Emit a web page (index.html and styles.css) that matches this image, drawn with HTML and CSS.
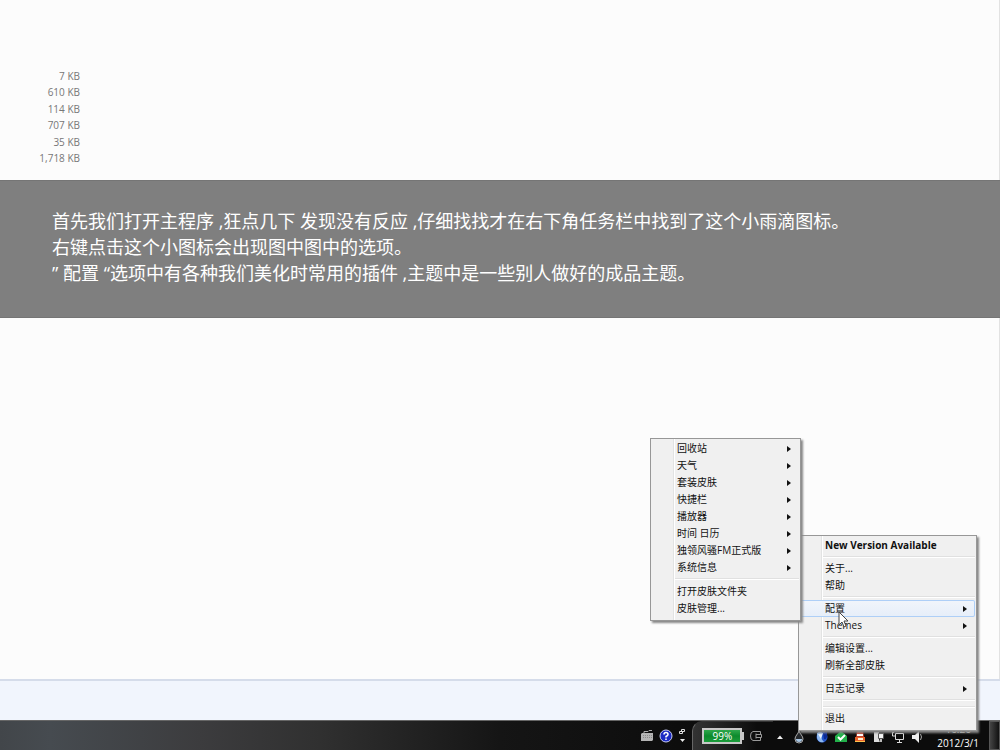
FILE: index.html
```html
<!DOCTYPE html>
<html lang="zh-CN">
  <head>
    <meta charset="utf-8">
    <title>Rainmeter</title>
    <link rel="stylesheet" href="styles.css">
  </head>
  <body>
    <main class="explorer">
      <ul class="sizes">
        <li>7 KB</li>
        <li>610 KB</li>
        <li>114 KB</li>
        <li>707 KB</li>
        <li>35 KB</li>
        <li>1,718 KB</li>
      </ul>
      <div class="banner">
        <p>首先我们打开主程序 ,狂点几下 发现没有反应 ,仔细找找才在右下角任务栏中找到了这个小雨滴图标。</p>
        <p>右键点击这个小图标会出现图中图中的选项。</p>
        <p>” 配置 “选项中有各种我们美化时常用的插件 ,主题中是一些别人做好的成品主题。</p>
      </div>
    </main>
    <div class="details"></div>

    <footer class="taskbar">
      <div class="langbar">
        <svg width="14" height="14" viewBox="0 0 14 14">
          <path d="M4 4.500V2.500h4l1-1h3" fill="none" stroke="#aaa"/>
          <path d="M2 4h11v7l-1 1H1V5z" fill="#b4b4b4"/>
          <path d="M3 6.500h9M3 8.500h9" stroke="#8a8a8a" stroke-dasharray="1 1"/>
        </svg>
        <svg width="14" height="14" viewBox="0 0 14 14">
          <circle cx="7" cy="7" r="6" fill="#1c2bc4" stroke="#c9cdf2"/>
          <path d="M5 5.500Q5 3.500 7 3.500T9 5.500Q9 6.500 7 7.500V8.500M7 9.500V11" fill="none" stroke="#fff" stroke-width="1.500"/>
        </svg>
        <svg width="8" height="16" viewBox="0 0 8 16">
          <path d="M3.500 1.500h3v2h-3zM1.500 3.500h3v2h-3z" fill="none" stroke="#ddd"/>
          <path d="M2 11h5l-2.500 3z" fill="#eee"/>
        </svg>
      </div>
      <div class="power">
        <div class="battery">99%</div>
        <svg width="14" height="12" viewBox="0 0 14 12">
          <path d="M9 1.500H4Q1.500 2 1.500 6T4 10.500H11.500V8M9 1.500h2.500V4M7 3.500v5M7 4.500h5.500v3H7" fill="none" stroke="#999"/>
        </svg>
      </div>
      <div class="tray">
        <svg width="14" height="14" viewBox="0 0 14 14"><path d="M4 9h6L7 5.500z" fill="#eee"/></svg>
        <svg class="raindrop" width="14" height="14" viewBox="0 0 14 14">
          <path d="M7 1C6 4 3 6 3 9a4 4 0 0 0 8 0C11 6 8 4 7 1z" fill="#25282c" stroke="#aaa"/>
          <path d="M4 9h6a3 3 0 0 1-6 0z" fill="#a9c8e6"/>
        </svg>
        <svg width="14" height="14" viewBox="0 0 14 14">
          <circle cx="7" cy="7" r="5.500" fill="#2456c8"/>
          <path d="M2 3Q4 1 7 2L6 7Q7 10 9 12Q3 13 2 8z" fill="#8db8ef"/>
          <path d="M8 3l4-1v5Q11 10 9 9z" fill="#0c2a96"/>
          <path d="M3 4l5-1-2 6z" fill="#e8f3ff"/>
        </svg>
        <svg width="14" height="14" viewBox="0 0 14 14">
          <path d="M1 6l6-5 6 5v6H1z" fill="#22b14a"/>
          <path d="M4 7l2.500 2.500L11 5" fill="none" stroke="#fff" stroke-width="2"/>
        </svg>
        <svg width="14" height="14" viewBox="0 0 14 14">
          <path d="M4 1h6l1 6H3z" fill="#c6402a"/>
          <path d="M4 4h6v2H4z" fill="#fff"/>
          <path d="M2 7h10v5H2z" fill="#e8632c"/>
          <path d="M5 8h5v2H5z" fill="#fff3d8"/>
          <path d="M2 11h10v1H2z" fill="#ffc34d"/>
        </svg>
        <svg width="14" height="14" viewBox="0 0 14 14">
          <path d="M2 2h5v10H2z" fill="#ddd"/>
          <path d="M6.500 3.500h5v5h-5z" fill="#f4f4f4" stroke="#555"/>
          <path d="M8 9h2v3H7z" fill="#bbb"/>
        </svg>
        <svg width="14" height="14" viewBox="0 0 14 14">
          <path d="M4.500 3.500h8v6h-8zM6 12.500h5M8.500 10v2M1.500 2v4h3M1 2.500h2" fill="none" stroke="#ddd"/>
        </svg>
        <svg width="14" height="14" viewBox="0 0 14 14">
          <path d="M2 5h3l4-4v12L5 9H2z" fill="#eee"/>
          <path d="M10.500 4q2 3 0 6" fill="none" stroke="#aaa"/>
        </svg>
      </div>
      <div class="clock">
        <time>16:26</time>
        <time>2012/3/1</time>
      </div>
      <button class="show-desktop" aria-label="显示桌面"></button>
    </footer>

    <ul class="menu menu-main">
      <li><button class="item default">New Version Available</button></li>
      <li class="line"></li>
      <li><button class="item">关于...</button></li>
      <li><button class="item">帮助</button></li>
      <li class="line"></li>
      <li><button class="item sub active">配置</button></li>
      <li><button class="item sub">Themes</button></li>
      <li class="line"></li>
      <li><button class="item">编辑设置...</button></li>
      <li><button class="item">刷新全部皮肤</button></li>
      <li class="line"></li>
      <li><button class="item sub">日志记录</button></li>
      <li class="line double"></li>
      <li><button class="item">退出</button></li>
    </ul>

    <ul class="menu menu-skins">
      <li><button class="item sub">回收站</button></li>
      <li><button class="item sub">天气</button></li>
      <li><button class="item sub">套装皮肤</button></li>
      <li><button class="item sub">快捷栏</button></li>
      <li><button class="item sub">播放器</button></li>
      <li><button class="item sub">时间 日历</button></li>
      <li><button class="item sub">独领风骚FM正式版</button></li>
      <li><button class="item sub">系统信息</button></li>
      <li class="line"></li>
      <li><button class="item">打开皮肤文件夹</button></li>
      <li><button class="item">皮肤管理...</button></li>
    </ul>

    <svg class="cursor" width="12" height="18" viewBox="0 0 12 18">
      <path d="M1 1v13l3-3 2 5 2-1-2-5h4z" fill="#fff" stroke="#444"/>
    </svg>
  </body>
</html>
```
FILE: styles.css
```css
* {
  box-sizing: border-box;
}

body {
  position: relative;
  display: flex;
  flex-direction: column;
  min-height: 100vh;
  margin: 0;
  overflow: hidden;
  background: #fcfcfc;
  font-family: "Open Sans", "Noto Sans CJK SC", sans-serif;
  font-size: 10px;
}

ul {
  margin: 0;
  padding: 0;
  list-style: none;
}

p {
  margin: 0;
}

svg {
  display: block;
  flex: none;
}

/* file list behind the banner */
.explorer {
  flex: 1;
  padding-top: 68px;
  border-right: 1px solid #e2e2e2;
}

.sizes {
  display: flex;
  flex-direction: column;
  justify-content: space-between;
  width: 80px;
  height: 98px;
  color: #777;
  line-height: 16px;
  text-align: right;
}

.banner {
  margin-top: 14px;
  margin-right: -1px;
  padding: 27px 52px 31px;
  border: solid #757575;
  border-width: 1px 0;
  background: #7f7f7f;
  color: #fff;
  font-size: 18px;
  line-height: 26px;
}

.details {
  height: 41px;
  border-top: 2px solid #d5dcea;
  background: #f1f5fd;
}

/* taskbar */
.taskbar {
  display: flex;
  justify-content: flex-end;
  height: 30px;
  border-top: 1px solid #666;
  background: linear-gradient(to right, #42464a, #464b50 5%, #3c3c3e 20%, #303030 32%, #151515 50%, #0c0c0c 70%);
  color: #fff;
}

.langbar {
  display: flex;
  align-items: center;
  gap: 5px;
  margin-right: 6px;
}

.power {
  display: flex;
  align-items: center;
  gap: 7px;
  padding: 0 10px 0 9px;
  border-top: 1px solid #333;
  border-left: 1px solid #666;
  border-top-left-radius: 10px;
  background: linear-gradient(to right, #333, #0c0c0c 80%);
}

.battery {
  position: relative;
  width: 40px;
  height: 16px;
  border: 2px solid #c8c8c8;
  background: linear-gradient(#2fa84c, #0c8a2c 50%, #1b9d3b);
  line-height: 12px;
  text-align: center;
}

.battery::after {
  content: "";
  position: absolute;
  top: 2px;
  right: -4px;
  width: 2px;
  height: 8px;
  background: #c8c8c8;
}

.tray {
  display: flex;
  align-items: center;
  gap: 5px;
  margin-right: 13px;
  padding-top: 3px;
}

.raindrop {
  margin-right: 4px;
}

.clock {
  display: flex;
  flex-direction: column;
  align-items: center;
  justify-content: flex-end;
  margin-right: 10px;
  line-height: 14px;
}

.show-desktop {
  width: 11px;
  padding: 0;
  border: 1px solid #555;
  background: linear-gradient(to right, #444, #111);
}

/* popup menus */
.menu {
  position: absolute;
  padding: 1px 1px 3px;
  border: 1px solid #979797;
  background: linear-gradient(to right, #f0f0f0 22px, #e2e3e3 22px, #e2e3e3 23px, #fff 23px, #fff 24px, #f0f0f0 24px);
  box-shadow: 2px 2px 2px #888;
}

.menu-main {
  right: 23px;
  bottom: 19px;
  width: 179px;
}

.menu-skins {
  right: 199px;
  bottom: 129px;
  width: 151px;
}

.item {
  display: block;
  width: 100%;
  height: 17px;
  padding: 0 25px;
  border: 0;
  background: none;
  color: #111;
  font: inherit;
  line-height: 17px;
  text-align: left;
  white-space: nowrap;
}

.default {
  font-weight: bold;
}

.active {
  border-radius: 2px;
  background: linear-gradient(#f1f5fb, #e6eef9);
  box-shadow: inset 0 0 0 1px #aecff7;
}

.sub {
  display: flex;
  align-items: center;
  justify-content: space-between;
  padding-right: 8px;
}

.sub::after {
  content: "";
  border: solid transparent;
  border-width: 3px 0 3px 4px;
  border-left-color: #111;
}

.line {
  height: 6px;
  margin-left: 23px;
  background: linear-gradient(transparent 2px, #e0e0e0 2px, #e0e0e0 3px, #fff 3px, #fff 4px, transparent 4px);
}

.menu-skins .line {
  height: 7px;
}

.double {
  height: 13px;
  background: linear-gradient(transparent 2px, #e0e0e0 2px, #e0e0e0 3px, #fff 3px, #fff 4px, transparent 4px, transparent 9px, #e0e0e0 9px, #e0e0e0 10px, #fff 10px, #fff 11px, transparent 11px);
}

.cursor {
  position: absolute;
  right: 150px;
  bottom: 121px;
}
```
